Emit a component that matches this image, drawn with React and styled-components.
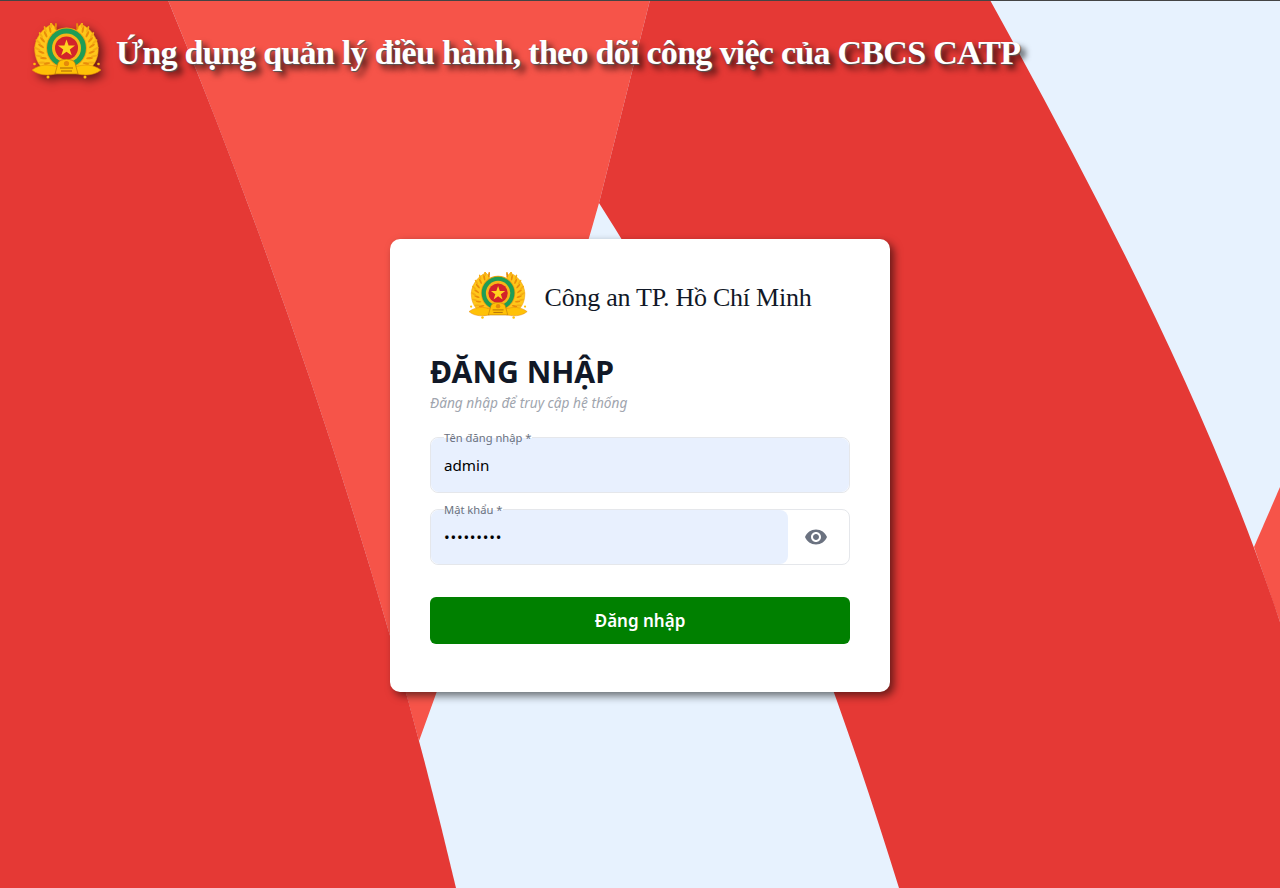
import React from "react";
import styled, { createGlobalStyle } from "styled-components";
import { MdVisibility } from "react-icons/md";

const GlobalStyle = createGlobalStyle`
  html, body {
    margin: 0;
    padding: 0;
    background: #e7f2fe;
  }
  * {
    box-sizing: border-box;
  }
`;

const Page = styled.div`
  position: relative;
  width: 100%;
  height: 888px;
  overflow: hidden;
  border-top: 1px solid #444;
  font-family: "Noto Sans", "Open Sans", sans-serif;
`;

const Backdrop = styled.svg`
  position: absolute;
  top: -1px;
  left: 0;
  width: 1280px;
  height: 888px;
`;

const Content = styled.div`
  position: relative;
  display: flex;
  flex-direction: column;
`;

const Header = styled.header`
  height: 99px;
  display: flex;
  align-items: flex-start;
  gap: 14px;
  padding: 22px 0 0 32px;
`;

const HeaderTitle = styled.h1`
  margin: 8px 0 0;
  font-family: "Liberation Serif", serif;
  font-size: 34px;
  line-height: 44px;
  letter-spacing: -0.72px;
  font-weight: 700;
  white-space: nowrap;
  color: #fff;
  text-shadow: 1px 1px 1px #555, 5px 5px 6px rgba(0, 0, 0, 0.75);
`;

const Main = styled.main`
  display: flex;
  justify-content: center;
  padding-top: 139px;
`;

const Card = styled.div`
  width: 500px;
  height: 453px;
  padding: 33px 40px 0;
  background: #fff;
  border-radius: 10px;
  box-shadow: 4px 4px 8px rgba(0, 0, 0, 0.55);
`;

const Brand = styled.div`
  display: flex;
  align-items: center;
  justify-content: center;
  gap: 17px;
`;

const BrandName = styled.div`
  padding-top: 5px;
  font-family: "Liberation Serif", serif;
  font-size: 26px;
  letter-spacing: -0.25px;
  color: #111827;
  white-space: nowrap;
`;

const Title = styled.h2`
  margin: 33px 0 0;
  font-size: 30.2px;
  line-height: 40px;
  font-weight: 700;
  color: #111827;
`;

const Subtitle = styled.p`
  margin: 2px 0 0;
  font-size: 13.7px;
  line-height: 18px;
  font-style: italic;
  color: #a0a5ae;
`;

const Fields = styled.div`
  display: flex;
  flex-direction: column;
  gap: 16px;
  margin-top: 25px;
`;

const Field = styled.div`
  position: relative;
  display: flex;
  height: 56px;
  border: 1px solid #e5e7eb;
  border-radius: 8px;
`;

const FieldLabel = styled.label`
  position: absolute;
  top: -7px;
  left: 13px;
  z-index: 1;
  font-size: 11.2px;
  line-height: 13px;
  color: #6b7280;
  background: linear-gradient(to bottom, #fff 7px, transparent 7px);
`;

const FieldInput = styled.input`
  flex: 1;
  min-width: 0;
  padding: 0 13px;
  border: 0;
  outline: 0;
  border-radius: 8px;
  background: #e8f0fe;
  font-family: inherit;
  font-size: 15.2px;
  color: #000;
  &[type="password"] {
    letter-spacing: 0.75px;
  }
`;

const EyeButton = styled.button`
  flex: none;
  width: 61px;
  display: flex;
  align-items: center;
  justify-content: center;
  padding: 0 5px 0 0;
  border: 0;
  background: none;
  color: #6b7280;
`;

const Submit = styled.button`
  display: block;
  width: 100%;
  height: 47px;
  margin-top: 32px;
  border: 0;
  border-radius: 6px;
  background: #008000;
  font-family: inherit;
  font-size: 17px;
  font-weight: 600;
  color: #fff;
`;

const EmblemSvg = styled.svg`
  flex: none;
  display: block;
  ${({ $raised }) =>
    $raised && "filter: drop-shadow(4px 4px 4px rgba(0, 0, 0, 0.55));"}
`;

// grain marks on the wreath, left side only, mirrored below
const grains = [25.5, 29].flatMap((radius, row) =>
  Array.from({ length: 9 }, (_, i) => {
    const deg = 115 + row * 7 + i * 15;
    const angle = deg * (Math.PI / 180);
    return {
      x: 34.5 + Math.cos(angle) * radius,
      y: 25 - Math.sin(angle) * (radius - 1.5),
      rot: 120 - deg,
      fill: row ? "#f5ad14" : "#e98c0a",
    };
  })
);

const Wing = () => (
  <>
    <path
      d="M20 1C9 6 1 18 3 30C4 38 8 44 14 48H30L24 5Z"
      fill="#ffc61a"
      stroke="#ee9a0d"
      strokeWidth="0.6"
    />
    {grains.map((g, i) => (
      <ellipse
        key={i}
        cx={g.x}
        cy={g.y}
        rx="1.1"
        ry="3.4"
        fill={g.fill}
        transform={`rotate(${g.rot} ${g.x} ${g.y})`}
      />
    ))}
    <path
      d="M0 47C8 41 17 41 26 44L27 50C18 53 7 53 0 47Z"
      fill="#ffc107"
      stroke="#e58a0a"
      strokeWidth="0.6"
    />
    <circle cx="2.5" cy="41" r="1.3" fill="#ffc107" />
    <circle cx="16" cy="54" r="1.5" fill="#ffc107" />
  </>
);

const Emblem = ({ width, raised }) => (
  <EmblemSvg
    $raised={raised}
    width={width}
    height={(width * 56) / 70}
    viewBox="0 0 70 56"
  >
    <Wing />
    <g transform="translate(69 0) scale(-1 1)">
      <Wing />
    </g>
    <circle cx="34.5" cy="25" r="20.5" fill="#f0a30f" />
    <circle cx="34.5" cy="25" r="19.5" fill="#1f9d55" />
    <circle cx="34.5" cy="25" r="14.5" fill="#f7b518" />
    <circle cx="34.5" cy="25" r="11.5" fill="#d3232a" />
    <polygon
      points="34.5,16.5 36.6,22.6 43,22.6 37.8,26.4 39.8,32.5 34.5,28.8 29.2,32.5 31.2,26.4 26,22.6 32.4,22.6"
      fill="#ffd21f"
    />
    <path
      d="M26 40C28 35 41 35 43 40L46 51H23Z"
      fill="#ffc107"
      stroke="#b9770a"
      strokeWidth="0.7"
    />
    <path d="M28 45H41M29 48H40" stroke="#a8650a" strokeWidth="1" />
    <circle cx="34.5" cy="40.5" r="2.6" fill="#e58a0a" />
  </EmblemSvg>
);

const Background = () => (
  <Backdrop viewBox="0 0 1280 888">
    <path
      d="M168 0H650L599 203C555 360 490 545 419 741C353.4 493.8 269.7 246.9 168 0Z"
      fill="#f65449"
    />
    <path d="M1254 547L1280 487V622Z" fill="#f65449" />
    <path d="M0 0H168C290 296 386 592 456 888H0Z" fill="#e53935" />
    <path
      d="M650 0H990C1104 207 1212 415 1280 622V888H899C828 660 745 431 599 203Z"
      fill="#e53935"
    />
  </Backdrop>
);

export default function App() {
  return (
    <>
      <GlobalStyle />
      <Page>
        <Background />
        <Content>
          <Header>
            <Emblem width={70} raised />
            <HeaderTitle>
              Ứng dụng quản lý điều hành, theo dõi công việc của CBCS CATP
            </HeaderTitle>
          </Header>
          <Main>
            <Card>
              <Brand>
                <Emblem width={59} />
                <BrandName>Công an TP. Hồ Chí Minh</BrandName>
              </Brand>
              <Title>ĐĂNG NHẬP</Title>
              <Subtitle>Đăng nhập để truy cập hệ thống</Subtitle>
              <Fields>
                <Field>
                  <FieldLabel>Tên đăng nhập *</FieldLabel>
                  <FieldInput defaultValue="admin" />
                </Field>
                <Field>
                  <FieldLabel>Mật khẩu *</FieldLabel>
                  <FieldInput type="password" defaultValue="123456789" />
                  <EyeButton type="button">
                    <MdVisibility size={24} />
                  </EyeButton>
                </Field>
              </Fields>
              <Submit type="button">Đăng nhập</Submit>
            </Card>
          </Main>
        </Content>
      </Page>
    </>
  );
}
